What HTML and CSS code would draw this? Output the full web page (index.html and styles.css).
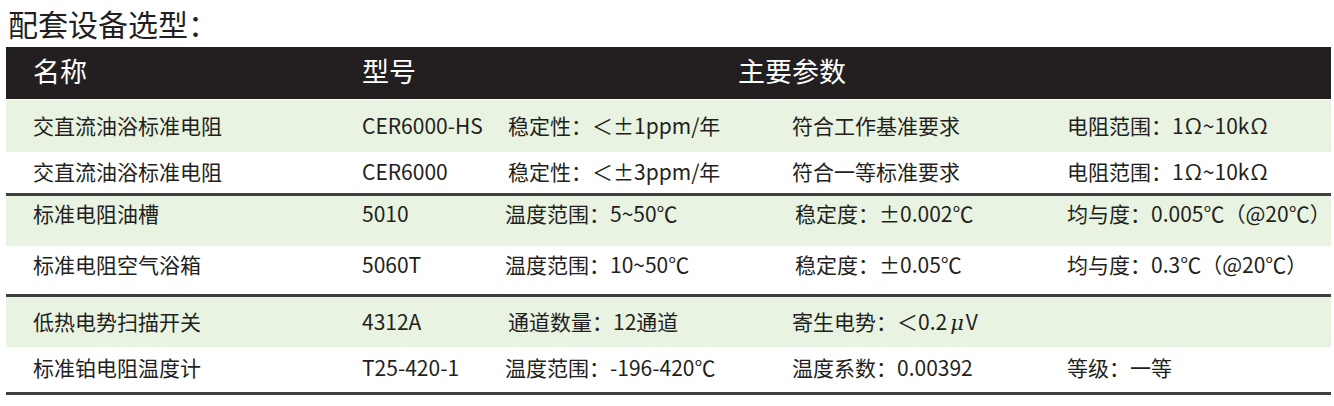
FILE: index.html
```html
<!DOCTYPE html>
<html lang="zh-CN">
<head>
<meta charset="utf-8">
<title>配套设备选型</title>
<link rel="stylesheet" href="styles.css">
</head>
<body>
<div class="page">
  <h1 class="title">配套设备选型：</h1>
  <div class="table">
    <div class="head">
      <div class="cell c1">名称</div>
      <div class="cell c2">型号</div>
      <div class="cell cspan">主要参数</div>
    </div>
    <div class="row green r1">
      <div class="cell c1">交直流油浴标准电阻</div>
      <div class="cell c2">CER6000-HS</div>
      <div class="cell c3 nudge">稳定性：＜±1ppm/年</div>
      <div class="cell c4">符合工作基准要求</div>
      <div class="cell c5">电阻范围：1<span class="gr">Ω</span>~10k<span class="gr">Ω</span></div>
    </div>
    <div class="row line r2">
      <div class="cell c1">交直流油浴标准电阻</div>
      <div class="cell c2">CER6000</div>
      <div class="cell c3 nudge">稳定性：＜±3ppm/年</div>
      <div class="cell c4">符合一等标准要求</div>
      <div class="cell c5">电阻范围：1<span class="gr">Ω</span>~10k<span class="gr">Ω</span></div>
    </div>
    <div class="row green r3">
      <div class="cell c1">标准电阻油槽</div>
      <div class="cell c2">5010</div>
      <div class="cell c3">温度范围：5~50℃</div>
      <div class="cell c4 nudge">稳定度：±0.002℃</div>
      <div class="cell c5">均与度：0.005℃（@20℃）</div>
    </div>
    <div class="row line r4">
      <div class="cell c1">标准电阻空气浴箱</div>
      <div class="cell c2">5060T</div>
      <div class="cell c3">温度范围：10~50℃</div>
      <div class="cell c4 nudge">稳定度：±0.05℃</div>
      <div class="cell c5">均与度：0.3℃（@20℃）</div>
    </div>
    <div class="row green r5">
      <div class="cell c1">低热电势扫描开关</div>
      <div class="cell c2">4312A</div>
      <div class="cell c3 nudge">通道数量：12通道</div>
      <div class="cell c4">寄生电势：＜0.2<span class="mu">μ</span>V</div>
      <div class="cell c5"></div>
    </div>
    <div class="row line r6">
      <div class="cell c1">标准铂电阻温度计</div>
      <div class="cell c2">T25-420-1</div>
      <div class="cell c3">温度范围：-196-420℃</div>
      <div class="cell c4">温度系数：0.00392</div>
      <div class="cell c5">等级：一等</div>
    </div>
  </div>
</div>
</body>
</html>
```

FILE: styles.css
```css
* { box-sizing: border-box; }

body {
  margin: 0;
  background: #ffffff;
  color: #231f20;
  font-family: "Noto Sans CJK SC", "Noto Sans", sans-serif;
}

.page {
  width: 1334px;
  padding: 0 3px 0 6px;
}

.title {
  margin: 0;
  padding-left: 2px;
  height: 47px;
  font-size: 30px;
  font-weight: 400;
  line-height: 47px;
  color: #231f20;
}

.table {
  width: 1325px;
}

.head,
.row {
  display: grid;
  grid-template-columns: 356px 143px 287px 275px 1fr;
}

.head {
  height: 52px;
  margin-bottom: 1px;
  background: #231f20;
  color: #ffffff;
  font-size: 27px;
  line-height: 48px;
}

.head .cspan {
  grid-column: 3 / 6;
  padding-left: 233px;
}

.cell {
  white-space: nowrap;
}

.c1 {
  padding-left: 27px;
}

.row {
  font-size: 21px;
  line-height: 24px;
  align-items: start;
}

.green {
  background: #e9f3e1;
}

.line {
  border-bottom: 3px solid #3f3f40;
}

.r1 { height: 52px; padding-top: 13px; }
.r2 { height: 44px; padding-top: 7px; }
.r3 { height: 50px; padding-top: 5px; }
.r4 { height: 51px; padding-top: 6px; }
.r5 { height: 50px; padding-top: 12px; }
.r6 { height: 48px; padding-top: 8px; }

.nudge {
  padding-left: 3px;
}

.gr {
  font-family: "Open Sans", "DejaVu Sans", sans-serif;
  font-size: 22px;
  padding: 0 1px;
}

.mu {
  font-family: "DejaVu Serif", "Liberation Serif", serif;
  font-style: italic;
  padding: 0 2px 0 3px;
}
```
